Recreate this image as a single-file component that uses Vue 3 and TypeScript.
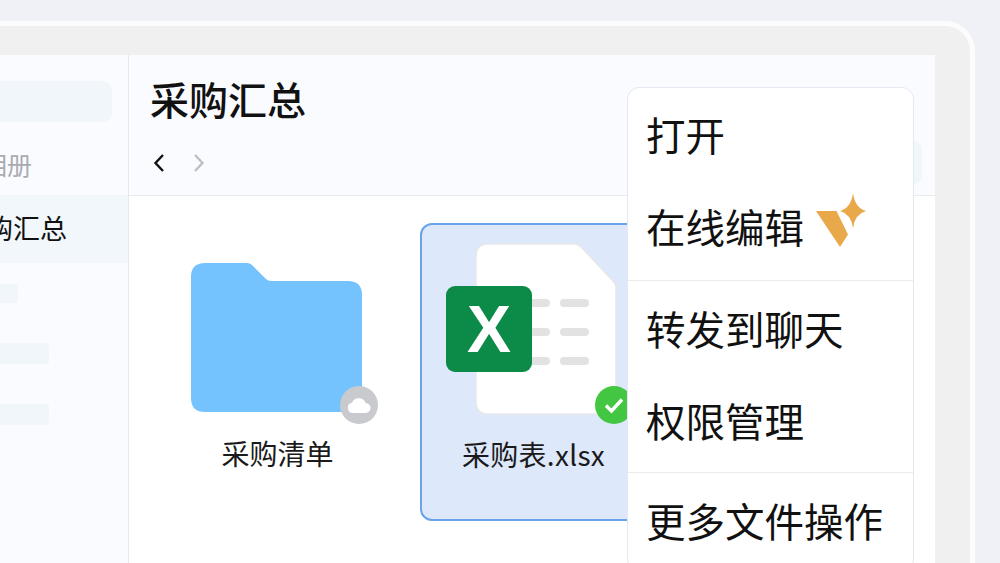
<template>
    <div class="page">
        <div class="device">
            <aside class="sidebar">
                <div class="search"></div>
                <div class="album">相册</div>
                <div class="current">采购汇总</div>
                <div class="stub stub-short"></div>
                <div class="stub"></div>
                <div class="stub"></div>
            </aside>
            <main class="panel">
                <header class="head">
                    <h1>采购汇总</h1>
                    <div class="nav">
                        <svg width="12" height="20" viewBox="0 0 12 20">
                            <path d="M10 2 L2.5 10 L10 18" fill="none" stroke="#111" stroke-width="2.4" />
                        </svg>
                        <svg class="next" width="12" height="20" viewBox="0 0 12 20">
                            <path d="M2 2 L9.5 10 L2 18" fill="none" stroke="#bdbfc4" stroke-width="2.4" />
                        </svg>
                        <div class="pill"></div>
                    </div>
                </header>
                <section class="files">
                    <div class="file">
                        <div class="folder">
                            <svg width="171" height="149" viewBox="0 0 171 149">
                                <path d="M14 0 H56 Q59 0 61 2 L75 16 Q77 18 80 18 H157 Q171 18 171 32 V135 Q171 149 157 149 H14 Q0 149 0 135 V14 Q0 0 14 0 Z" fill="#74c3ff" />
                            </svg>
                            <span class="badge badge-cloud">
                                <svg width="24" height="16" viewBox="0 0 24 16">
                                    <path d="M6 16 A5.2 5.2 0 0 1 5 5.7 A7.3 7.3 0 0 1 18.6 6 A5 5 0 0 1 18.5 16 Z" fill="#fff" />
                                </svg>
                            </span>
                        </div>
                        <div class="name">采购清单</div>
                    </div>
                    <div class="file file-selected">
                        <div class="sheet">
                            <svg width="142" height="172" viewBox="0 0 142 172">
                                <path d="M13 1 H100 Q103 1 106 4 L137 37 Q141 41 141 45 V158 Q141 171 128 171 H13 Q1 171 1 158 V14 Q1 1 13 1 Z" fill="#fff" stroke="#e7e8ea" stroke-width="1.5" />
                                <rect x="40" y="56" width="35" height="8" rx="4" fill="#e2e2e2" />
                                <rect x="85" y="56" width="29" height="8" rx="4" fill="#e2e2e2" />
                                <rect x="40" y="85" width="35" height="8" rx="4" fill="#e2e2e2" />
                                <rect x="85" y="85" width="29" height="8" rx="4" fill="#e2e2e2" />
                                <rect x="40" y="114" width="35" height="8" rx="4" fill="#e2e2e2" />
                                <rect x="85" y="114" width="29" height="8" rx="4" fill="#e2e2e2" />
                            </svg>
                            <span class="excel">X</span>
                            <span class="badge badge-ok">
                                <svg width="22" height="18" viewBox="0 0 22 18">
                                    <path d="M3 9.5 L8.500 15 L19 3.500" fill="none" stroke="#fff" stroke-width="3.4" />
                                </svg>
                            </span>
                        </div>
                        <div class="name">采购表.xlsx</div>
                    </div>
                </section>
                <div class="menu">
                    <div class="menu-group first">
                        <div class="menu-item">打开</div>
                        <div class="menu-item">
                            在线编辑
                            <svg class="spark" width="52" height="56" viewBox="0 0 52 56">
                                <path d="M1 18 H21.500 L33 41.500 L25 54 Z" fill="#e9a94a" />
                                <path d="M38 0 Q40 15 51 18 Q40 21 38 35 Q36 21 25 18 Q36 15 38 0 Z" fill="#e9a94a" />
                            </svg>
                        </div>
                    </div>
                    <div class="menu-group second">
                        <div class="menu-item">转发到聊天</div>
                        <div class="menu-item">权限管理</div>
                    </div>
                    <div class="menu-group">
                        <div class="menu-item">更多文件操作</div>
                    </div>
                </div>
            </main>
        </div>
    </div>
</template>

<script setup lang="ts">
</script>

<style>
html,
body {
    margin: 0;
    overflow: hidden;
}
</style>

<style scoped>
.page {
    width: 1000px;
    height: 563px;
    overflow: hidden;
    padding-top: 21px;
    box-sizing: border-box;
    background: #eff1f6;
    font-family: "Noto Sans CJK SC", "Noto Sans", sans-serif;
    color: #111;
}

.device {
    display: flex;
    width: 1060px;
    height: 600px;
    margin-left: -85px;
    padding: 29px 35px 0 0;
    box-sizing: border-box;
    border: 5px solid #fcfcfd;
    border-radius: 30px;
    background: #f0f0f0;
}

.sidebar {
    width: 209px;
    flex: none;
    padding-top: 26px;
    box-sizing: border-box;
    background: #fafbff;
    border-right: 1px solid #e6e9f4;
}

.search {
    height: 41px;
    margin: 0 16px 0 40px;
    border-radius: 9px;
    background: #f1f6fa;
}

.album {
    height: 44px;
    margin-top: 21px;
    padding-left: 62px;
    font-size: 25px;
    line-height: 42px;
    color: #a9abb1;
}

.current {
    height: 68px;
    margin-top: 8px;
    margin-bottom: 21px;
    padding-left: 39px;
    font-size: 27px;
    line-height: 66px;
    background: #f1f7fa;
}

.stub {
    width: 129px;
    height: 21px;
    margin-bottom: 40px;
    border-radius: 3px;
    background: #f1f6fa;
}

.stub-short {
    width: 98px;
    height: 19px;
}

.panel {
    position: relative;
    flex: 1;
    min-width: 0;
    background: #fff;
}

.head {
    height: 141px;
    padding: 21px 13px 0 21px;
    box-sizing: border-box;
    border-bottom: 1px solid #e8ebf2;
    background: #fafbff;
}

h1 {
    margin: 0;
    font-size: 39px;
    font-weight: 500;
    line-height: 44px;
}

.nav {
    display: flex;
    align-items: center;
    height: 43px;
    margin-top: 21px;
    padding-left: 3px;
}

.next {
    margin-left: 28px;
}

.pill {
    width: 60px;
    height: 43px;
    margin-left: auto;
    border-radius: 8px;
    background: #f1f6fa;
}

.files {
    display: flex;
    gap: 29px;
    padding: 27px 0 0 35px;
}

.file {
    width: 227px;
    height: 298px;
    flex: none;
    box-sizing: border-box;
    border: 2px solid transparent;
    border-radius: 12px;
}

.file-selected {
    border-color: #6aa3ec;
    background: #dde8fb;
}

.folder {
    position: relative;
    width: 171px;
    height: 149px;
    margin: 38px 0 0 25px;
}

.folder svg {
    display: block;
}

.badge {
    position: absolute;
    display: flex;
    align-items: center;
    justify-content: center;
    width: 38px;
    height: 38px;
    border-radius: 50%;
}

.badge svg {
    display: block;
}

.badge-cloud {
    right: -16px;
    bottom: -12px;
    background: #c9cace;
}

.sheet {
    position: relative;
    width: 142px;
    height: 172px;
    margin: 18px 0 0 53px;
}

.sheet > svg {
    display: block;
}

.excel {
    position: absolute;
    left: -29px;
    top: 43px;
    width: 86px;
    height: 86px;
    border-radius: 9px;
    background: #0c8a47;
    color: #fff;
    font-family: "Liberation Sans", sans-serif;
    font-size: 66px;
    font-weight: 700;
    line-height: 86px;
    text-align: center;
}

.badge-ok {
    right: -16px;
    bottom: -9px;
    background: #43c743;
}

.name {
    margin-top: 19px;
    font-size: 28px;
    line-height: 44px;
    text-align: center;
    color: #1a1a1a;
}

.file-selected .name {
    margin-top: 17px;
    letter-spacing: 0.3px;
}

.menu {
    position: absolute;
    left: 498px;
    top: 32px;
    width: 287px;
    box-sizing: border-box;
    border: 1px solid #e3e8f3;
    border-radius: 12px;
    background: #fff;
    overflow: hidden;
}

.menu-group {
    padding: 2px 0 4px;
    border-top: 1px solid #e9ebf0;
}

.menu-group.first {
    padding: 1px 0 7px;
    border-top: 0;
}

.menu-group.second {
    padding: 2px 0 5px;
}

.menu-item {
    display: flex;
    align-items: center;
    height: 92px;
    box-sizing: border-box;
    padding: 0 0 3px 18px;
    font-size: 39.5px;
    line-height: 89px;
}

.spark {
    margin: -9px 0 0 11px;
}
</style>
